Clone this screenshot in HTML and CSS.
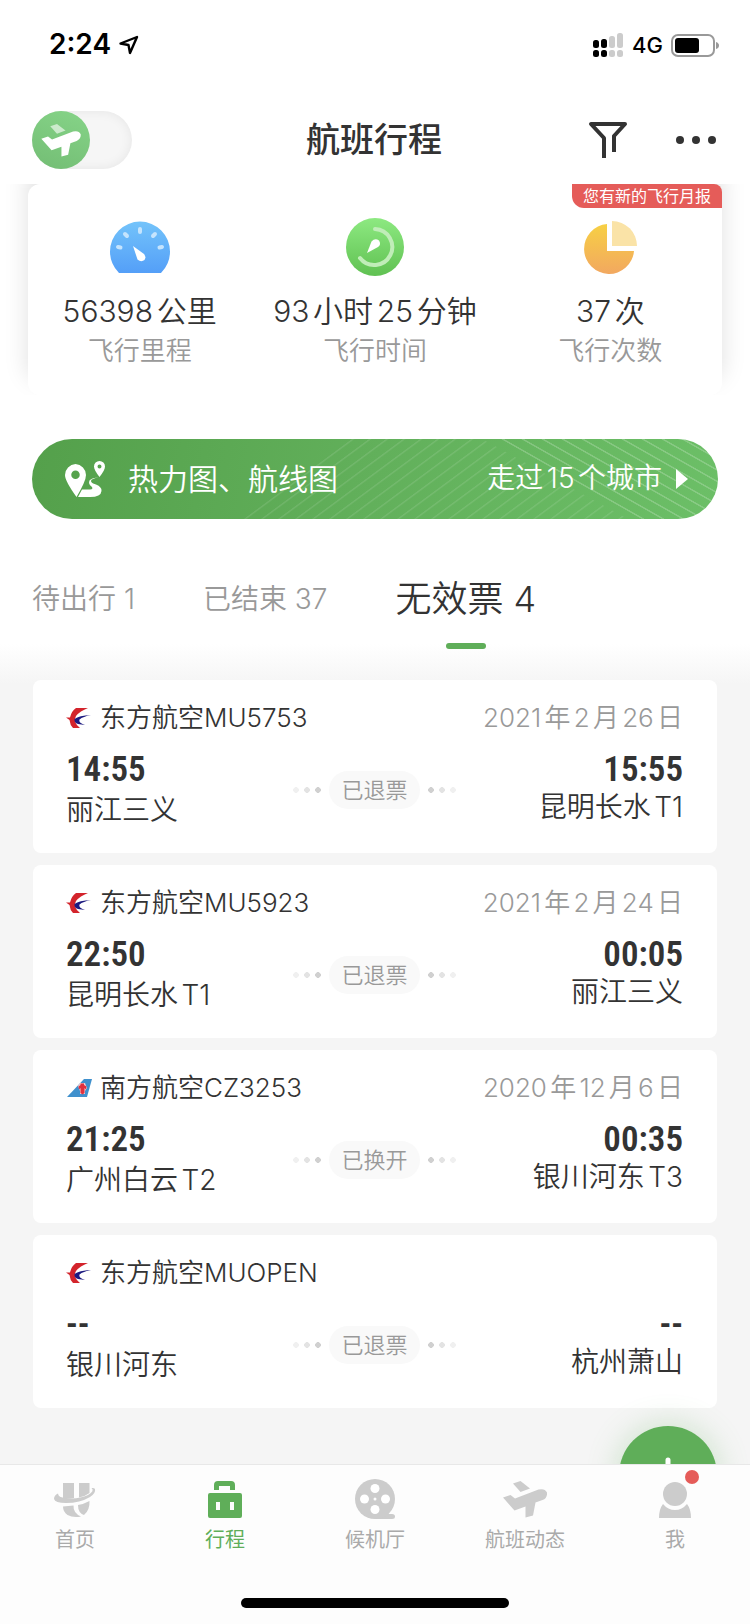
FILE: index.html
```html
<!DOCTYPE html>
<html lang="zh-CN">
<head>
  <meta charset="UTF-8" />
  <meta name="viewport" content="width=device-width, initial-scale=1.0"/>
  <title>航班行程</title>
  <link rel="stylesheet" href="styles.css">
</head>
<body>

  <!-- shared icons -->
  <svg class="sprite" aria-hidden="true">
    <symbol id="plane" viewBox="0 0 44 38">
      <path class="wing" d="M10 3.500 L17.500 1 L27 8.500 L17.500 12 Z"/>
      <path d="M0 17.500 L7.500 15 L12 18.500 L35.500 9.500 Q42 8 44 12.500 Q44.500 18 39.500 20 L32.500 22.500 L30 35.500 L22.500 37.500 V26.500 L11.500 30.500 Z"/>
    </symbol>
    <symbol id="eastern" viewBox="0 0 26 22">
      <path fill="#d3242c" d="M10 1 H22 Q14 4 10 9 Q6.500 15 14 21 H7 Q4 18 3.500 13 L0 10.500 H4 Q5.500 4 10 1 Z"/>
      <path fill="#1d1a80" d="M25 8 Q13 8.500 8.500 12 Q8 16 12 17 L19 18 Q12 15.500 13.500 12.500 Q17 9.500 25 8 Z"/>
    </symbol>
    <symbol id="southern" viewBox="0 0 26 22">
      <path fill="#3f90cd" d="M18 2 H26 L21 20 H1 Z"/>
      <path fill="#f4c9cf" d="M12 9 L14 6 L19 6 L21 11 L19 14 V17 H14 V14 Z"/>
      <path fill="#e1303d" d="M14.500 6.500 H18 V8 L20.500 9.500 L20 12.500 L18.500 11 V16 L16.500 17.500 L14.500 16 V11 L13 12.500 L12.500 9.500 L14.500 8 Z"/>
    </symbol>
  </svg>

  <div class="status-bar">
    <div class="clock">
      2:24
      <svg width="20" height="20" viewBox="0 0 20 20"><path d="M1.500 8.500 L18 2 L11 18 L9.500 10 Z" fill="none" stroke="#000" stroke-width="2.400" stroke-linejoin="round"/></svg>
    </div>
    <div class="signal">
      <svg width="31" height="24" viewBox="0 0 31 24">
        <g fill="#000">
          <rect x="0" y="7" width="6" height="8" rx="2.500"/><rect x="8" y="6" width="6" height="9" rx="2.500"/>
          <rect x="0" y="17" width="6" height="7" rx="2.500"/><rect x="8" y="17" width="6" height="7" rx="2.500"/>
        </g>
        <g fill="#ccc">
          <rect x="16" y="3" width="6" height="12" rx="2.500"/><rect x="24" y="0" width="6" height="15" rx="2.500"/>
          <rect x="16" y="17" width="6" height="7" rx="2.500"/><rect x="24" y="17" width="6" height="7" rx="2.500"/>
        </g>
      </svg>
      <span>4G</span>
      <svg width="49" height="24" viewBox="0 0 49 24">
        <rect x="1" y="2" width="42" height="21" rx="6" fill="none" stroke="#999" stroke-width="2"/>
        <rect x="4" y="5" width="24" height="15" rx="3"/>
        <path d="M45 9 Q48 10 48 12.500 Q48 15 45 16 Z" fill="#999"/>
      </svg>
    </div>
  </div>

  <header class="top-bar">
    <label class="mode-switch">
      <input type="checkbox" aria-label="切换模式">
      <span class="knob"><svg width="40" height="34"><use href="#plane"/></svg></span>
    </label>
    <h1>航班行程</h1>
    <div class="actions">
      <button type="button" aria-label="筛选">
        <svg width="40" height="38" viewBox="0 0 40 38"><path d="M16 37 V17 L3 3 H37 L26 15 V31" fill="none" stroke="#333" stroke-width="4" stroke-linejoin="round"/></svg>
      </button>
      <button type="button" aria-label="更多">
        <svg width="40" height="8" viewBox="0 0 40 8" fill="#333"><circle cx="4" cy="4" r="4"/><circle cx="20" cy="4" r="4"/><circle cx="36" cy="4" r="4"/></svg>
      </button>
    </div>
  </header>

  <main>
    <section class="stats-wrap">
      <div class="stats">
        <a class="report" href="#report">您有新的飞行月报</a>
        <div class="stat">
          <svg width="60" height="60" viewBox="0 0 60 60">
            <defs><linearGradient id="blue" x2="0" y2="1"><stop stop-color="#73c3fa"/><stop offset="1" stop-color="#549ff8"/></linearGradient></defs>
            <path fill="url(#blue)" d="M9 56 A30 30 0 1 1 51 56 Z"/>
            <g stroke="#c5e4fd" stroke-width="4" stroke-linecap="round"><path d="M30 12 V15"/><path d="M15 17 L17 19"/><path d="M45 17 L43 19"/><path d="M8 30 L10.500 30.500"/><path d="M52 30 L49.500 30.500"/></g>
            <path fill="#fff" d="M23 29 L34 37 Q36.500 40 34.500 43 Q31 45.500 27.500 42.500 Z"/>
          </svg>
          <strong>56398公里</strong>
          <span>飞行里程</span>
        </div>
        <div class="stat">
          <svg width="60" height="60" viewBox="0 0 60 60">
            <defs><linearGradient id="green" x2="0" y2="1"><stop stop-color="#8de981"/><stop offset="1" stop-color="#60c152"/></linearGradient></defs>
            <circle cx="30" cy="30" r="29" fill="url(#green)"/>
            <path d="M30 12 A18 18 0 1 1 15 41" fill="none" stroke="#c0edb8" stroke-width="4" stroke-linecap="round"/>
            <path fill="#fff" d="M22 36 L26.500 24.500 Q30 20.500 34 23.500 Q36.500 27.500 33 30 Z"/>
          </svg>
          <strong>93小时25分钟</strong>
          <span>飞行时间</span>
        </div>
        <div class="stat">
          <svg width="60" height="60" viewBox="0 0 60 60">
            <defs><linearGradient id="amber" x2="0" y2="1"><stop stop-color="#f7d044"/><stop offset="1" stop-color="#f2a860"/></linearGradient></defs>
            <path fill="url(#amber)" d="M27 7 V34 H54 A25 25 0 1 1 27 7 Z"/>
            <path fill="#fae3a7" d="M32 4 A25 25 0 0 1 57 29 H32 Z"/>
          </svg>
          <strong>37次</strong>
          <span>飞行次数</span>
        </div>
      </div>
    </section>

    <a class="map-banner" href="#map">
      <svg class="stripes" width="686" height="80" viewBox="0 0 686 80">
        <defs>
          <pattern id="rise" width="17" height="80" patternUnits="userSpaceOnUse" patternTransform="skewX(-53.500)"><rect x="14" width="2.500" height="80" fill="#fff" opacity=".1"/></pattern>
          <pattern id="fall" width="20" height="80" patternUnits="userSpaceOnUse" patternTransform="skewX(60.400)"><rect x="9" width="3" height="80" fill="#fff" opacity=".2"/></pattern>
        </defs>
        <path fill="url(#rise)" d="M205 80 L313 0 H450 L596 80 Z"/>
        <path fill="url(#fall)" d="M465 0 H686 V80 H606 Z"/>
      </svg>
      <svg class="pins" width="42" height="38" viewBox="0 0 42 38">
        <g fill="#fff" fill-rule="evenodd">
          <path d="M11.500 4 A11 11 0 0 1 22 15 Q22 21 12.500 37 Q1 21 1 15 A11 11 0 0 1 11.500 4 Z M11.500 10.500 A4 4 0 1 0 11.500 19 A4 4 0 1 0 11.500 10.500 Z"/>
          <path d="M35.500 1 A5.500 5.500 0 0 1 41 6.500 Q41 10 35.500 17 Q30 10 30 6.500 A5.500 5.500 0 0 1 35.500 1 Z M35.500 4.500 A2 2 0 1 0 35.500 8.500 A2 2 0 1 0 35.500 4.500 Z"/>
          <path d="M35 17.500 Q27 18.500 27 21 Q27 23 32 24.500 Q38 27 37.500 31 Q37 37 26 37 H14 L18 29.500 H26 Q30 29 27.500 26.500 Q24 24 25.500 20.500 Q28 17.500 35 17.500 Z"/>
        </g>
      </svg>
      <span class="banner-title">热力图、航线图</span>
      <span class="banner-note">走过15个城市</span>
      <svg width="12" height="20" viewBox="0 0 12 20"><path d="M0 0 L12 10 L0 20 Z" fill="#fff"/></svg>
    </a>

    <div class="tabs">
      <button type="button">待出行 1</button>
      <button type="button">已结束 37</button>
      <button type="button" class="active">无效票 4</button>
    </div>

    <div class="tickets">
      <article class="ticket">
        <div class="ticket-head">
          <svg class="logo"><use href="#eastern"/></svg>
          <h2>东方航空MU5753</h2>
          <time>2021年2月26日</time>
        </div>
        <div class="route">
          <div class="from"><b>14:55</b><span>丽江三义</span></div>
          <div class="state"><i class="dots"></i><em>已退票</em><i class="dots flip"></i></div>
          <div class="to"><b>15:55</b><span>昆明长水T1</span></div>
        </div>
      </article>

      <article class="ticket">
        <div class="ticket-head">
          <svg class="logo"><use href="#eastern"/></svg>
          <h2>东方航空MU5923</h2>
          <time>2021年2月24日</time>
        </div>
        <div class="route">
          <div class="from"><b>22:50</b><span>昆明长水T1</span></div>
          <div class="state"><i class="dots"></i><em>已退票</em><i class="dots flip"></i></div>
          <div class="to"><b>00:05</b><span>丽江三义</span></div>
        </div>
      </article>

      <article class="ticket">
        <div class="ticket-head">
          <svg class="logo"><use href="#southern"/></svg>
          <h2>南方航空CZ3253</h2>
          <time>2020年12月6日</time>
        </div>
        <div class="route">
          <div class="from"><b>21:25</b><span>广州白云T2</span></div>
          <div class="state"><i class="dots"></i><em>已换开</em><i class="dots flip"></i></div>
          <div class="to"><b>00:35</b><span>银川河东T3</span></div>
        </div>
      </article>

      <article class="ticket">
        <div class="ticket-head">
          <svg class="logo"><use href="#eastern"/></svg>
          <h2>东方航空MUOPEN</h2>
        </div>
        <div class="route">
          <div class="from"><b>--</b><span>银川河东</span></div>
          <div class="state"><i class="dots"></i><em>已退票</em><i class="dots flip"></i></div>
          <div class="to"><b>--</b><span>杭州萧山</span></div>
        </div>
      </article>
    </div>
  </main>

  <button type="button" class="add" aria-label="添加行程">
    <svg width="36" height="36" viewBox="0 0 36 36"><path d="M18 3 V33 M3 18 H33" stroke="#fff" stroke-width="5" stroke-linecap="round"/></svg>
  </button>

  <nav class="bottom-nav">
    <div class="nav-items">
      <a href="#home">
        <svg width="44" height="40" viewBox="0 0 44 40" fill="#ccc">
          <path d="M10 4 H21 V19 Q15 20 10 19 Z"/>
          <path d="M26 4 H36.500 V14 Q32 17.500 26 18.500 Z"/>
          <path d="M5 14.500 Q1 16 1 20 Q2 24 13 24 Q27 24 37 18 Q43 14 42 10 Q41 8.500 38.500 9 Q42 12 35 16 Q25 20.500 13 19 Q5 18.500 5 14.500 Z"/>
          <path d="M10 27.500 L20.500 26.500 Q20 34 28 37.500 Q20 39 14.500 36 Q10 33 10 27.500 Z"/>
          <path d="M25 26 Q31 25 36.500 22 Q37 31 31 36 Q25 34 25 26 Z"/>
        </svg>
        <span>首页</span>
      </a>
      <a href="#trips" class="active">
        <svg width="44" height="40" viewBox="0 0 44 40" fill="#5fae59">
          <path d="M11 11 V6 Q11 2 15 2 H28 Q32 2 32 6 V11 H27 V7 H16 V11 Z"/>
          <path fill-rule="evenodd" d="M7 14 H37 Q39 14 39 16 V37 Q39 39 37 39 H7 Q5 39 5 37 V16 Q5 14 7 14 Z M13 23 V31 H17 V23 Z M27 23 V31 H31 V23 Z"/>
        </svg>
        <span>行程</span>
      </a>
      <a href="#lounge">
        <svg width="44" height="40" viewBox="0 0 44 40">
          <path d="M22 35 H39 Q42 35 42 37.500 Q42 40 39 40 H22 Z" fill="#ccc"/>
          <circle cx="22" cy="20" r="20" fill="#ccc"/>
          <g fill="#fff"><circle cx="22" cy="9.500" r="4.500"/><circle cx="22" cy="30.500" r="4.500"/><circle cx="11.500" cy="20" r="4.500"/><circle cx="32.500" cy="20" r="4.500"/><circle cx="22" cy="20" r="1.500"/></g>
        </svg>
        <span>候机厅</span>
      </a>
      <a href="#flights">
        <svg width="44" height="40" fill="#ccc"><use href="#plane" y="1" width="44" height="38"/></svg>
        <span>航班动态</span>
      </a>
      <a href="#me">
        <svg width="44" height="40" viewBox="0 0 44 40" fill="#ccc"><circle cx="22" cy="15" r="12"/><path d="M10 25 Q15 31 22 31 Q29 31 34 25 Q38 30 38 39 H6 Q6 30 10 25 Z"/></svg>
        <i class="unread"></i>
        <span>我</span>
      </a>
    </div>
    <div class="home-bar"></div>
  </nav>

</body>
</html>
```
FILE: styles.css
```css
:root {
  --primary: #5fae59;
  --alert: #e55c59;
  --text: #333;
  --muted: #999;
  --bg: #f5f5f5;
}

* {
  box-sizing: border-box;
}

body {
  margin: 0;
  min-height: 100vh;
  display: flex;
  flex-direction: column;
  font-family: Inter, "Noto Sans CJK SC", sans-serif;
  font-weight: 350;
  line-height: 1.2;
  color: var(--text);
  background-color: var(--bg);
}

a {
  color: inherit;
  text-decoration: none;
}

button {
  padding: 0;
  border: none;
  background: none;
  color: inherit;
  font: inherit;
  cursor: pointer;
}

svg {
  display: block;
}

.sprite {
  position: absolute;
  width: 0;
  height: 0;
}

.wing {
  opacity: var(--wing, 1);
}

.status-bar {
  display: flex;
  justify-content: space-between;
  align-items: center;
  height: 88px;
  padding: 2px 30px 0 49px;
  background-color: #fff;
  color: #000;
}

.clock {
  display: flex;
  align-items: center;
  gap: 8px;
  font-size: 28px;
  font-weight: 600;
}

.signal {
  display: flex;
  align-items: center;
  gap: 8px;
  font-size: 22px;
  font-weight: 500;
}

.top-bar {
  display: grid;
  grid-template-columns: 1fr auto 1fr;
  align-items: center;
  height: 96px;
  padding: 8px 34px 0 32px;
  background-color: #fff;
}

.top-bar h1 {
  margin: 0;
  font-size: 34px;
  font-weight: 500;
}

.mode-switch {
  width: 100px;
  height: 58px;
  border-radius: 29px;
  background-color: #f6f6f6;
  box-shadow: inset 0 0 12px rgba(0, 0, 0, 0.07);
}

.mode-switch input {
  position: absolute;
  opacity: 0;
}

.knob {
  display: flex;
  justify-content: center;
  align-items: center;
  width: 58px;
  height: 58px;
  border-radius: 50%;
  background: linear-gradient(200deg, #86d488, #73bd74);
  fill: #fff;
  --wing: 0.6;
}

.mode-switch input:checked + .knob {
  margin-left: 42px;
}

.actions {
  display: flex;
  justify-content: flex-end;
  align-items: center;
  gap: 48px;
}

main {
  flex: 1;
  padding-bottom: 56px;
  background: linear-gradient(#fff 460px, var(--bg) 500px);
}

.stats-wrap {
  padding: 0 28px;
  overflow: hidden;
  background-color: #fff;
}

.stats {
  position: relative;
  display: grid;
  grid-template-columns: repeat(3, 1fr);
  gap: 12px;
  padding: 33px 0 24px;
  border-radius: 12px;
  background-color: #fff;
  box-shadow: 0 -16px 24px rgba(0, 0, 0, 0.13);
}

.report {
  position: absolute;
  top: 0;
  right: 0;
  padding: 0 11px;
  border-radius: 0 8px 0 12px;
  background-color: var(--alert);
  color: #fff;
  font-size: 16px;
  font-weight: 400;
  line-height: 24px;
}

.stat {
  display: flex;
  flex-direction: column;
  align-items: center;
  white-space: nowrap;
}

.stat strong {
  margin-top: 14px;
  font-size: 30px;
  font-weight: 350;
  line-height: 40px;
  text-autospace: normal;
}

.stat span {
  color: var(--muted);
  font-size: 26px;
  line-height: 40px;
}

.map-banner {
  position: relative;
  display: flex;
  align-items: center;
  height: 80px;
  padding: 0 30px 0 32px;
  margin: 44px 32px 0;
  border-radius: 40px;
  overflow: hidden;
  background: linear-gradient(100deg, #54a04b, #62b05b 50%, #6cbf67);
  color: #fff;
}

.stripes {
  position: absolute;
  top: 0;
  right: 0;
}

.pins,
.banner-title,
.banner-note {
  position: relative;
}

.banner-title {
  flex: 1;
  margin-left: 22px;
  font-size: 30px;
}

.banner-note {
  margin-right: 14px;
  font-size: 28px;
  text-autospace: normal;
}

.tabs {
  display: flex;
  align-items: center;
  gap: 68px;
  padding: 56px 32px 55px;
  color: var(--muted);
  font-size: 28px;
}

.tabs button {
  position: relative;
  height: 50px;
}

.tabs .active {
  color: var(--text);
  font-size: 36px;
}

.tabs .active::after {
  content: "";
  position: absolute;
  bottom: -24px;
  left: 50%;
  width: 40px;
  height: 6px;
  margin-left: -20px;
  border-radius: 3px;
  background-color: var(--primary);
}

.tickets {
  display: grid;
  gap: 12px;
  padding: 0 33px;
}

.ticket {
  padding: 20px 34px 25px 33px;
  border-radius: 8px;
  background-color: #fff;
}

.ticket-head {
  display: flex;
  align-items: center;
  height: 36px;
  font-size: 26px;
}

.logo {
  width: 26px;
  height: 22px;
  margin-right: 8px;
}

.ticket h2 {
  flex: 1;
  margin: 0;
  font-size: 26px;
  font-weight: 350;
}

.ticket time {
  color: var(--muted);
  text-autospace: normal;
}

.route {
  display: grid;
  grid-template-columns: 1fr auto 1fr;
  align-items: center;
  height: 76px;
  margin-top: 16px;
}

.from,
.to {
  display: flex;
  flex-direction: column;
  height: 76px;
  gap: 4px;
  font-size: 28px;
  line-height: 36px;
  text-autospace: normal;
}

.to {
  gap: 1px;
  text-align: right;
}

.route b {
  font-family: "Roboto Condensed", Roboto, sans-serif;
  font-size: 35px;
  font-weight: 600;
}

.state {
  display: flex;
  align-items: center;
  gap: 8px;
}

.state em {
  padding: 0 12px;
  border-radius: 19px;
  background-color: #f9f9f9;
  color: var(--muted);
  font-size: 22px;
  font-style: normal;
  line-height: 38px;
}

.dots {
  width: 28px;
  height: 6px;
  background:
    radial-gradient(circle closest-side, #f0f0f0 90%, transparent) 0 0 / 6px 6px no-repeat,
    radial-gradient(circle closest-side, #e3e3e3 90%, transparent) 11px 0 / 6px 6px no-repeat,
    radial-gradient(circle closest-side, #d0d0d0 90%, transparent) 22px 0 / 6px 6px no-repeat;
}

.dots.flip {
  transform: rotate(180deg);
}

.add {
  position: fixed;
  right: 33px;
  bottom: 100px;
  display: grid;
  place-items: center;
  width: 98px;
  height: 98px;
  border-radius: 50%;
  background-color: var(--primary);
  box-shadow: 0 0 32px rgba(95, 174, 89, 0.3);
}

.bottom-nav {
  position: sticky;
  bottom: 0;
  height: 160px;
  padding-top: 14px;
  border-top: 1px solid #e8e8e8;
  background-color: #fdfdfd;
}

.nav-items {
  display: grid;
  grid-template-columns: repeat(5, 1fr);
}

.nav-items a {
  position: relative;
  display: flex;
  flex-direction: column;
  align-items: center;
  gap: 6px;
  color: #aaa;
  font-size: 20px;
  font-weight: 400;
  line-height: 30px;
}

.nav-items .active {
  color: var(--primary);
}

.unread {
  position: absolute;
  top: -9px;
  left: 50%;
  width: 14px;
  height: 14px;
  margin-left: 10px;
  border-radius: 50%;
  background-color: var(--alert);
}

.home-bar {
  width: 268px;
  height: 10px;
  margin: 43px auto 0;
  border-radius: 5px;
  background-color: #000;
}
```
